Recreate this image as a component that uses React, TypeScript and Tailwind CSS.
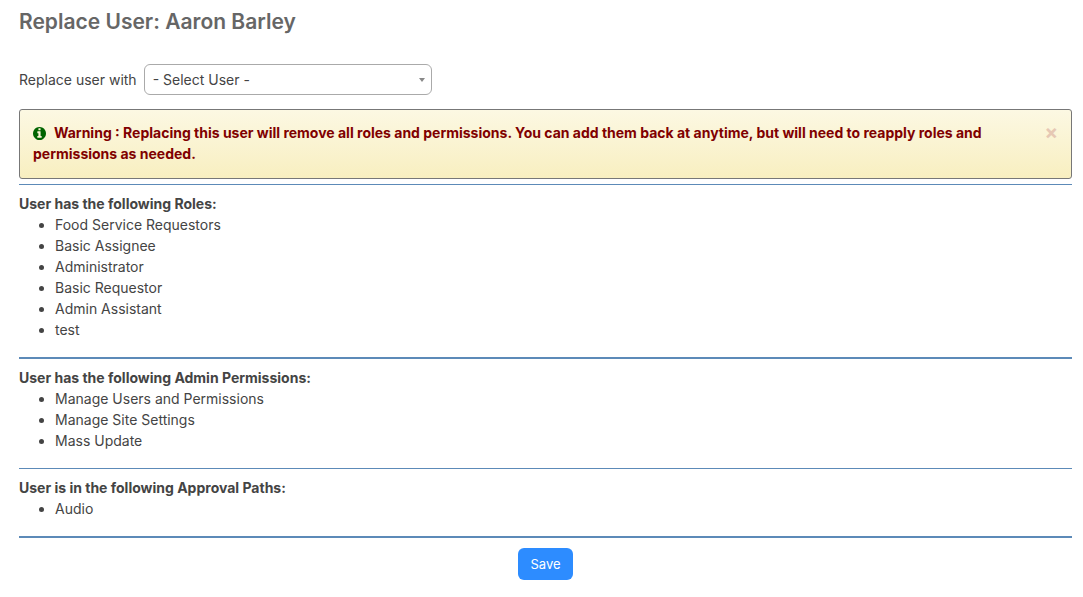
import clsx from "clsx";

interface UserSectionProps {
  title: string;
  items: string[];
  thick?: boolean;
}

const roles = [
  "Food Service Requestors",
  "Basic Assignee",
  "Administrator",
  "Basic Requestor",
  "Admin Assistant",
  "test",
];

const adminPermissions = [
  "Manage Users and Permissions",
  "Manage Site Settings",
  "Mass Update",
];

const approvalPaths = ["Audio"];

function InfoIcon({ className }: { className?: string }) {
  return (
    <svg viewBox="0 128 1536 1536" fill="currentColor" aria-hidden="true" className={className}>
      <path d="M1024 1376v-160q0-14-9-23t-23-9h-96v-512q0-14-9-23t-23-9h-320q-14 0-23 9t-9 23v160q0 14 9 23t23 9h96v320h-96q-14 0-23 9t-9 23v160q0 14 9 23t23 9h448q14 0 23-9t9-23zm-128-896v-160q0-14-9-23t-23-9h-192q-14 0-23 9t-9 23v160q0 14 9 23t23 9h192q14 0 23-9t9-23zm640 416q0 209-103 385.5t-279.5 279.5-385.5 103-385.5-103-279.5-279.5-103-385.5 103-385.5 279.5-279.5 385.5-103 385.5 103 279.5 279.5 103 385.5z" />
    </svg>
  );
}

function UserSection({ title, items, thick }: UserSectionProps) {
  return (
    <section className={clsx("border-[#5c8ab8] pt-2 pb-[17px]", thick ? "border-t-2" : "border-t")}>
      <h2 className="font-bold">{title}</h2>
      <ul className="list-disc pl-9">
        {items.map((item) => (
          <li key={item}>{item}</li>
        ))}
      </ul>
    </section>
  );
}

export default function App() {
  return (
    <main className="pl-[19px] pr-[11px] pt-2 pb-4 font-['Inter',sans-serif] text-sm leading-[21px] text-[#444]">
      <h1 className="text-[21px] leading-7 font-semibold text-[#666]">
        Replace User: Aaron Barley
      </h1>

      <form>
        <div className="mt-7 flex items-center gap-[7px]">
          <label htmlFor="replacement">Replace user with</label>
          <div className="relative">
            <select
              id="replacement"
              className="h-[31px] w-72 appearance-none rounded-md border border-[#aaa] bg-white pl-2 pr-6"
            >
              <option>- Select User -</option>
            </select>
            <span className="pointer-events-none absolute right-[7px] top-[14px] border-x-[3px] border-t-4 border-x-transparent border-t-[#888]" />
          </div>
        </div>

        {/* Warning */}
        <div
          role="alert"
          className="mt-[14px] mb-[5px] flex items-start rounded-[3px] border border-[#777] bg-linear-to-b from-[#fcf8e3] to-[#f8efc0] pt-3 pb-[14px] px-[13px] font-bold text-[#800000]"
        >
          <p className="flex-1 pr-8">
            <InfoIcon className="mr-2 inline size-[13px] align-[-2px] text-[#006400]" />
            Warning : Replacing this user will remove all roles and permissions. You can add them
            back at anytime, but will need to reapply roles and permissions as needed.
          </p>
          <button type="button" aria-label="Close" className="text-xl leading-5 text-[#e6c8b4]">
            ×
          </button>
        </div>

        <UserSection title="User has the following Roles:" items={roles} />
        <UserSection title="User has the following Admin Permissions:" items={adminPermissions} thick />
        <UserSection title="User is in the following Approval Paths:" items={approvalPaths} />

        <div className="flex justify-center border-t-2 border-[#5c8ab8] pt-[10px]">
          <button type="submit" className="h-8 rounded-md bg-[#2d8cff] px-3 text-[13px] text-white">
            Save
          </button>
        </div>
      </form>
    </main>
  );
}
